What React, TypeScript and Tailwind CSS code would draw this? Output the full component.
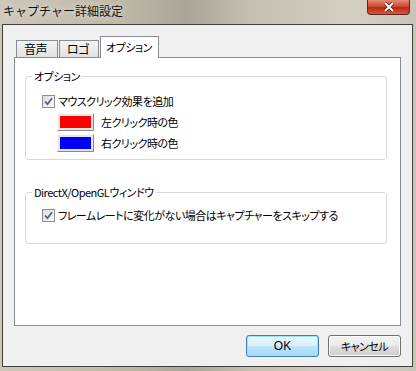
import React from 'react';

const jp = "font-['Noto_Sans_CJK_JP','Noto_Sans',sans-serif]";

const CheckBox: React.FC = () => (
  <span className="w-[13px] h-[13px] shrink-0 border border-[#8e8f8f] bg-gradient-to-br from-[#dcdcdc] to-[#fbfbfb] flex items-center justify-center">
    <svg width="9" height="9" viewBox="0 0 9 9">
      <path d="M1 4.5 L3.5 7.2 L8 1.2" fill="none" stroke="#4d5e8c" strokeWidth="1.8" />
    </svg>
  </span>
);

const Swatch: React.FC<{ color: string }> = ({ color }) => (
  <span className="w-[37px] h-[18px] shrink-0 border border-t-[#fafafa] border-l-[#fafafa] border-r-[#8a8a8a] border-b-[#8a8a8a] bg-[#e8e8e8] p-[2px] flex">
    <span className={`flex-1 ${color}`} />
  </span>
);

const GroupBox: React.FC<{ label: string; className: string; children: React.ReactNode }> = ({ label, className, children }) => (
  <div className={`relative border border-[#d5dadf] rounded-[3px] ${className}`}>
    <span className="absolute left-[6px] top-[-9px] bg-white px-[2px] leading-[16px] whitespace-nowrap">{label}</span>
    {children}
  </div>
);

const App: React.FC = () => {
  return (
    <div className={`w-[416px] h-[371px] flex flex-col text-[11px] text-black ${jp} bg-[linear-gradient(90deg,#cdc8ba_0%,#bdb7a6_30%,#a9a598_45%,#c4bfb0_60%,#d3cfc3_85%,#c9c5b8_100%)]`}>
      {/* title bar */}
      <div className="relative h-[24px] shrink-0 flex items-center pl-[3px] pb-[2px]">
        <span className="leading-[16px] text-[12px] text-[#111] [text-shadow:0_0_6px_#f4f1e8]">キャプチャー詳細設定</span>
        <div className="absolute right-[6px] top-0 w-[43px] h-[15px] rounded-b-[4px] border border-t-0 border-[#5a2a22] bg-[linear-gradient(180deg,#e48a76_0%,#d04a30_45%,#b72a14_55%,#d45a3c_100%)] flex items-center justify-center">
          <svg width="12" height="10" viewBox="0 0 12 10">
            <path d="M2 1 L10 9 M10 1 L2 9" stroke="#4a1a12" strokeWidth="3.4" />
            <path d="M2 1 L10 9 M10 1 L2 9" stroke="#ffffff" strokeWidth="2" />
          </svg>
        </div>
      </div>

      {/* client area */}
      <div className="flex-1 ml-[2px] mr-[3px] mb-[4px] border border-[#3f3f3f] bg-[#f0f0f0] flex flex-col pt-[11px] pl-[11px] pr-[11px] pb-[9px] [font-feature-settings:'palt'] tracking-[-0.5px]">
        {/* tabs */}
        <div className="flex items-end h-[21px] pl-[2px] relative z-10">
          <div className="h-[17px] w-[42px] border border-b-0 border-[#898c95] bg-gradient-to-b from-[#f3f3f3] to-[#e2e2e2] flex items-center pl-[7px] leading-none text-[12px]">音声</div>
          <div className="h-[17px] w-[40px] ml-[1px] border border-b-0 border-[#898c95] bg-gradient-to-b from-[#f3f3f3] to-[#e2e2e2] flex items-center pl-[7px] leading-none text-[12px]">ロゴ</div>
          <div className="h-[22px] w-[59px] ml-[1px] -mb-px border border-b-0 border-[#898c95] bg-white flex items-start pt-[3px] pl-[5px] leading-[14px] whitespace-nowrap">オプション</div>
        </div>

        {/* panel */}
        <div className="flex-1 border border-[#898c95] bg-white pt-[18px] pl-[10px] pr-[13px]">
          <GroupBox label="オプション" className="h-[84px]">
            <div className="flex items-center gap-[3px] mt-[17px] ml-[16px]">
              <CheckBox />
              <span className="leading-[14px]">マウスクリック効果を追加</span>
            </div>
            <div className="flex items-center gap-[7px] mt-[5px] ml-[31px]">
              <Swatch color="bg-[#ff0000]" />
              <span className="leading-[14px]">左クリック時の色</span>
            </div>
            <div className="flex items-center gap-[7px] mt-[3px] ml-[31px]">
              <Swatch color="bg-[#0000ff]" />
              <span className="leading-[14px]">右クリック時の色</span>
            </div>
          </GroupBox>

          <GroupBox label="DirectX/OpenGLウィンドウ" className="h-[52px] mt-[32px]">
            <div className="flex items-center gap-[3px] mt-[15px] ml-[16px]">
              <CheckBox />
              <span className="leading-[14px] whitespace-nowrap">フレームレートに変化がない場合はキャプチャーをスキップする</span>
            </div>
          </GroupBox>
        </div>

        {/* buttons */}
        <div className="flex justify-end gap-[9px] mt-[9px]">
          <button className="w-[73px] h-[22px] rounded-[3px] border border-[#3c7fb1] shadow-[inset_0_0_0_1px_#9ee3fb] bg-[linear-gradient(180deg,#eaf6fd_0%,#d9f0fc_50%,#bee6fd_51%,#a7d9f5_100%)] flex items-center justify-center leading-none text-[12px] tracking-normal font-normal font-['Liberation_Sans','Noto_Sans_CJK_JP',sans-serif]">
            OK
          </button>
          <button className="w-[73px] h-[22px] rounded-[3px] border border-[#707070] shadow-[inset_0_0_0_1px_#fcfcfc] bg-[linear-gradient(180deg,#f2f2f2_0%,#ebebeb_50%,#dddddd_51%,#cfcfcf_100%)] flex items-center justify-center leading-none">
            キャンセル
          </button>
        </div>
      </div>
    </div>
  );
};

export default App;
